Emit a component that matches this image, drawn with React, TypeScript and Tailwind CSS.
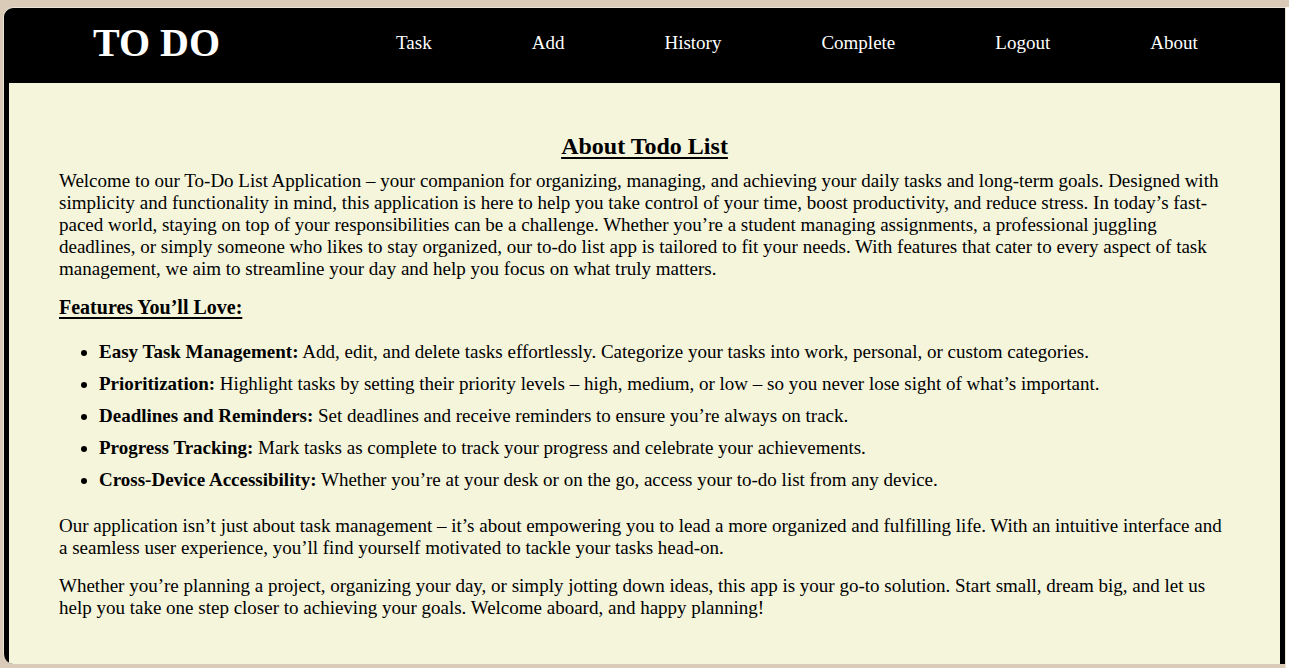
const navItems = ["Task", "Add", "History", "Complete", "Logout", "About"];

const features = [
  {
    title: "Easy Task Management:",
    text: "Add, edit, and delete tasks effortlessly. Categorize your tasks into work, personal, or custom categories.",
  },
  {
    title: "Prioritization:",
    text: "Highlight tasks by setting their priority levels – high, medium, or low – so you never lose sight of what’s important.",
  },
  {
    title: "Deadlines and Reminders:",
    text: "Set deadlines and receive reminders to ensure you’re always on track.",
  },
  {
    title: "Progress Tracking:",
    text: "Mark tasks as complete to track your progress and celebrate your achievements.",
  },
  {
    title: "Cross-Device Accessibility:",
    text: "Whether you’re at your desk or on the go, access your to-do list from any device.",
  },
];

export default function App() {
  return (
    <div className="flex h-[668px] overflow-hidden bg-[#dacbb8] pt-[7px] pl-[3px] font-['Liberation_Serif',serif] text-black">
      <div className="flex flex-1 flex-col overflow-hidden rounded-tl-[10px] rounded-bl-[10px] border-t border-l border-[#ede4d8] bg-black px-[5px] mb-[4px]">
        <header className="flex h-[75px] shrink-0 items-center pb-[5px] text-white">
          <h1 className="ml-[84px] text-[40px] font-bold leading-none">TO DO</h1>
          <nav className="ml-[176px] flex gap-[100px] text-[19px]">
            {navItems.map((item) => (
              <a key={item} href="#" className="text-white">
                {item}
              </a>
            ))}
          </nav>
        </header>

        <main className="flex-1 bg-[#f5f5dc] px-[50px] pt-[49px] text-[19px] leading-[22px]">
          <h2 className="mb-[10px] text-center text-[24px] font-bold leading-[28px] underline underline-offset-[3px]">
            About Todo List
          </h2>
          <p>
            Welcome to our To-Do List Application – your companion for organizing, managing, and achieving your daily
            tasks and long-term goals. Designed with simplicity and functionality in mind, this application is here to
            help you take control of your time, boost productivity, and reduce stress. In today’s fast-paced world,
            staying on top of your responsibilities can be a challenge. Whether you’re a student managing assignments,
            a professional juggling deadlines, or simply someone who likes to stay organized, our to-do list app is
            tailored to fit your needs. With features that cater to every aspect of task management, we aim to
            streamline your day and help you focus on what truly matters.
          </p>
          <h3 className="mt-[16px] text-[20px] font-bold underline underline-offset-[3px]">Features You’ll Love:</h3>
          <ul className="mt-[23px] list-disc pl-[40px]">
            {features.map((f) => (
              <li key={f.title} className="mb-[10px]">
                <strong>{f.title}</strong> {f.text}
              </li>
            ))}
          </ul>
          <p className="mt-[24px]">
            Our application isn’t just about task management – it’s about empowering you to lead a more organized and
            fulfilling life. With an intuitive interface and a seamless user experience, you’ll find yourself motivated
            to tackle your tasks head-on.
          </p>
          <p className="mt-[16px]">
            Whether you’re planning a project, organizing your day, or simply jotting down ideas, this app is your
            go-to solution. Start small, dream big, and let us help you take one step closer to achieving your goals.
            Welcome aboard, and happy planning!
          </p>
        </main>
      </div>
      <div className="w-[4px] shrink-0 border-l border-[#ede4d8] bg-white" />
    </div>
  );
}
